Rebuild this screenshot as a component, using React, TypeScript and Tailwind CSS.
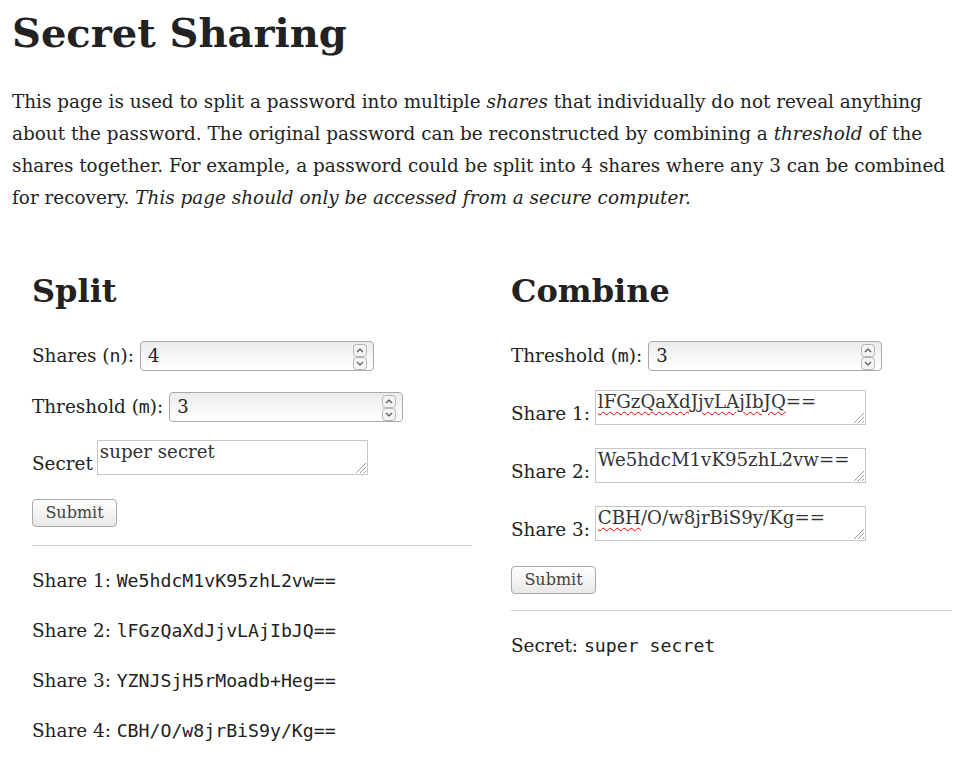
import React from 'react';

const serif = { fontFamily: '"DejaVu Serif", serif' };
const mono = { fontFamily: '"DejaVu Sans Mono", monospace', fontSize: '18.2px' };

const Spinner = () => (
    <div className="absolute right-[6px] top-[2px] flex flex-col">
        <svg width="14" height="13" viewBox="0 0 14 13">
            <rect x="0.5" y="0.5" width="13" height="12" rx="3" fill="#f4f4f4" stroke="#b5b5b5" />
            <path d="M4 8 L7 5 L10 8" fill="none" stroke="#555" strokeWidth="1.2" />
        </svg>
        <svg width="14" height="13" viewBox="0 0 14 13">
            <rect x="0.5" y="0.5" width="13" height="12" rx="3" fill="#f4f4f4" stroke="#b5b5b5" />
            <path d="M4 5 L7 8 L10 5" fill="none" stroke="#555" strokeWidth="1.2" />
        </svg>
    </div>
);

const NumberBox = ({ value }: { value: string }) => (
    <div className="relative w-[234px] h-[30px] border border-[#a9a9a9] rounded-[4px] bg-gradient-to-b from-[#ececec] to-white pl-[7px] leading-[28px] text-[18px] text-[#222]">
        {value}
        <Spinner />
    </div>
);

const Grip = () => (
    <svg className="absolute right-0 bottom-0" width="14" height="14" viewBox="0 0 14 14">
        <path d="M13 3 L3 13 M13 7 L7 13 M13 11 L11 13" stroke="#999" strokeWidth="1" />
    </svg>
);

const TextBox = ({ children }: { children: React.ReactNode }) => (
    <div className="relative w-[271px] h-[35px] border border-[#c8c8c8] bg-white px-[2px] leading-[21px] text-[18.2px] text-[#333] overflow-hidden">
        {children}
        <Grip />
    </div>
);

const Typo = ({ children }: { children: React.ReactNode }) => (
    <span className="underline decoration-wavy decoration-[#e00] decoration-1 underline-offset-[3px]">{children}</span>
);

const Button = () => (
    <div className="w-[85px] h-[28px] border border-[#aaa] rounded-[4px] bg-gradient-to-b from-white to-[#e8e8e8] text-center leading-[26px] text-[16px] text-[#444]">
        Submit
    </div>
);

export default function App() {
    return (
        <div className="min-h-screen bg-white text-[#222] px-3" style={serif}>
            <h1 className="text-[40px] font-bold leading-none pt-[13px]">Secret Sharing</h1>
            <p className="mt-[33px] text-[18.4px] leading-[32px]">
                This page is used to split a password into multiple <em>shares</em> that individually do not reveal anything about the
                password. The original password can be reconstructed by combining a <em>threshold</em> of the shares together. For example, a
                password could be split into 4 shares where any 3 can be combined for recovery. <em>This page should only be accessed from a secure computer.</em>
            </p>

            <div className="flex pl-5 gap-[39px] mt-[61px]">
                {/* split column */}
                <div className="w-[440px]">
                    <h2 className="text-[32px] font-bold leading-none">Split</h2>
                    <div className="mt-[34px] flex items-center gap-[6px] text-[18.4px]">
                        <span>Shares (<span style={mono}>n</span>):</span>
                        <NumberBox value="4" />
                    </div>
                    <div className="mt-[21px] flex items-center gap-[6px] text-[18.4px]">
                        <span>Threshold (<span style={mono}>m</span>):</span>
                        <NumberBox value="3" />
                    </div>
                    <div className="mt-[18px] flex items-end gap-[4px] text-[18.4px]">
                        <span className="leading-[22px]">Secret</span>
                        <TextBox>super secret</TextBox>
                    </div>
                    <div className="mt-[24px]">
                        <Button />
                    </div>
                    <div className="mt-[18px] border-t border-[#ccc]" />
                    <div className="text-[18.4px] leading-[26px] mt-[22px] flex flex-col gap-[24px]">
                        <div>Share 1: <span style={mono}>We5hdcM1vK95zhL2vw==</span></div>
                        <div>Share 2: <span style={mono}>lFGzQaXdJjvLAjIbJQ==</span></div>
                        <div>Share 3: <span style={mono}>YZNJSjH5rMoadb+Heg==</span></div>
                        <div>Share 4: <span style={mono}>CBH/O/w8jrBiS9y/Kg==</span></div>
                    </div>
                </div>

                {/* combine column */}
                <div className="w-[441px]">
                    <h2 className="text-[32px] font-bold leading-none">Combine</h2>
                    <div className="mt-[34px] flex items-center gap-[6px] text-[18.4px]">
                        <span>Threshold (<span style={mono}>m</span>):</span>
                        <NumberBox value="3" />
                    </div>
                    <div className="mt-[19px] flex items-end gap-[5px] text-[18.4px]">
                        <span className="leading-[22px]">Share 1:</span>
                        <TextBox><Typo>lFGzQaXdJjvLAjIbJQ</Typo>==</TextBox>
                    </div>
                    <div className="mt-[23px] flex items-end gap-[5px] text-[18.4px]">
                        <span className="leading-[22px]">Share 2:</span>
                        <TextBox>We5hdcM1vK95zhL2vw==</TextBox>
                    </div>
                    <div className="mt-[23px] flex items-end gap-[5px] text-[18.4px]">
                        <span className="leading-[22px]">Share 3:</span>
                        <TextBox><Typo>CBH</Typo>/O/w8jrBiS9y/Kg==</TextBox>
                    </div>
                    <div className="mt-[25px]">
                        <Button />
                    </div>
                    <div className="mt-[16px] border-t border-[#ccc]" />
                    <div className="text-[18.4px] leading-[26px] mt-[22px]">
                        Secret: <span style={mono}>super secret</span>
                    </div>
                </div>
            </div>
        </div>
    );
}
